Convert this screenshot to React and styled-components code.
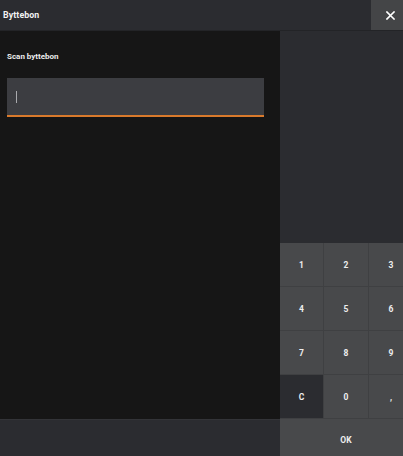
import React from "react";
import styled, { createGlobalStyle } from "styled-components";

const Global = createGlobalStyle`
  html, body { margin: 0; padding: 0; background: #161616; overflow: hidden; }
  body { font-family: Roboto, "Liberation Sans", Arial, sans-serif; }
  #root { width: 403px; height: 456px; overflow: hidden; }
`;

const Screen = styled.div`
  width: 412px;
  height: 456px;
  display: flex;
  flex-direction: column;
  color: #f2f2f2;
  overflow: hidden;
`;

const Header = styled.div`
  height: 31px;
  flex: none;
  display: flex;
  align-items: stretch;
  background: #2b2c30;
  border-bottom: 1px solid #232427;
  box-sizing: border-box;
`;

const Title = styled.div`
  flex: 1;
  display: flex;
  align-items: center;
  padding-left: 3px;
  font-size: 8.8px;
  font-weight: 700;
  letter-spacing: 0.1px;
`;

const CloseButton = styled.button`
  width: 41px;
  border: none;
  padding: 0 3px 0 0;
  background: #444547;
  display: flex;
  align-items: center;
  justify-content: center;
  cursor: pointer;
`;

const Body = styled.div`
  height: 425px;
  flex: none;
  display: flex;
  overflow: hidden;
`;

const LeftColumn = styled.div`
  width: 280px;
  flex: none;
  display: flex;
  flex-direction: column;
`;

const Main = styled.div`
  height: 388px;
  flex: none;
  background: #161616;
  padding: 21px 16px 0 7px;
  box-sizing: border-box;
  display: flex;
  flex-direction: column;
`;

const Label = styled.div`
  font-size: 8px;
  font-weight: 700;
  color: #ececec;
  line-height: 10px;
`;

const InputBox = styled.div`
  margin-top: 16px;
  height: 39px;
  width: 257px;
  background: #3c3d41;
  border-bottom: 2px solid #d97a2c;
  box-sizing: border-box;
  display: flex;
  align-items: center;
  padding-left: 9px;
`;

const Caret = styled.div`
  width: 1px;
  height: 12px;
  background: #a9aaad;
`;

const Footer = styled.div`
  flex: 1;
  background: #2b2c30;
  border-top: 1px solid #333438;
  box-sizing: border-box;
`;

const RightColumn = styled.div`
  width: 132px;
  flex: none;
  display: flex;
  flex-direction: column;
`;

const Display = styled.div`
  height: 212px;
  flex: none;
  background: #2b2c30;
`;

const Keypad = styled.div`
  display: grid;
  grid-template-columns: 43px 44px 44px;
  grid-auto-rows: 43px;
  background: #3f4042;
  gap: 1px;
  flex: none;
`;

const Key = styled.button`
  border: none;
  padding: 0;
  margin: 0;
  background: ${(p) => (p.$dark ? "#2b2c30" : "#48494b")};
  color: #eeeeee;
  font-family: Roboto, "Liberation Sans", Arial, sans-serif;
  font-size: 8.5px;
  font-weight: 700;
  display: flex;
  align-items: center;
  justify-content: center;
  cursor: pointer;
`;

const OkKey = styled(Key)`
  height: 43px;
  flex: none;
  border-top: 1px solid #3f4042;
`;

const keys = ["1", "2", "3", "4", "5", "6", "7", "8", "9", "C", "0", ","];

export default function App() {
  return (
    <>
      <Global />
      <Screen>
        <Header>
          <Title>Byttebon</Title>
          <CloseButton aria-label="Luk">
            <svg width="9" height="9" viewBox="0 0 9 9">
              <path d="M1 1 L8 8 M8 1 L1 8" stroke="#ffffff" strokeWidth="1.6" strokeLinecap="square" />
            </svg>
          </CloseButton>
        </Header>
        <Body>
          <LeftColumn>
            <Main>
              <Label>Scan byttebon</Label>
              <InputBox>
                <Caret />
              </InputBox>
            </Main>
            <Footer />
          </LeftColumn>
          <RightColumn>
            <Display />
            <Keypad>
              {keys.map((k) => (
                <Key key={k} $dark={k === "C"}>
                  {k}
                </Key>
              ))}
            </Keypad>
            <OkKey>OK</OkKey>
          </RightColumn>
        </Body>
      </Screen>
    </>
  );
}
